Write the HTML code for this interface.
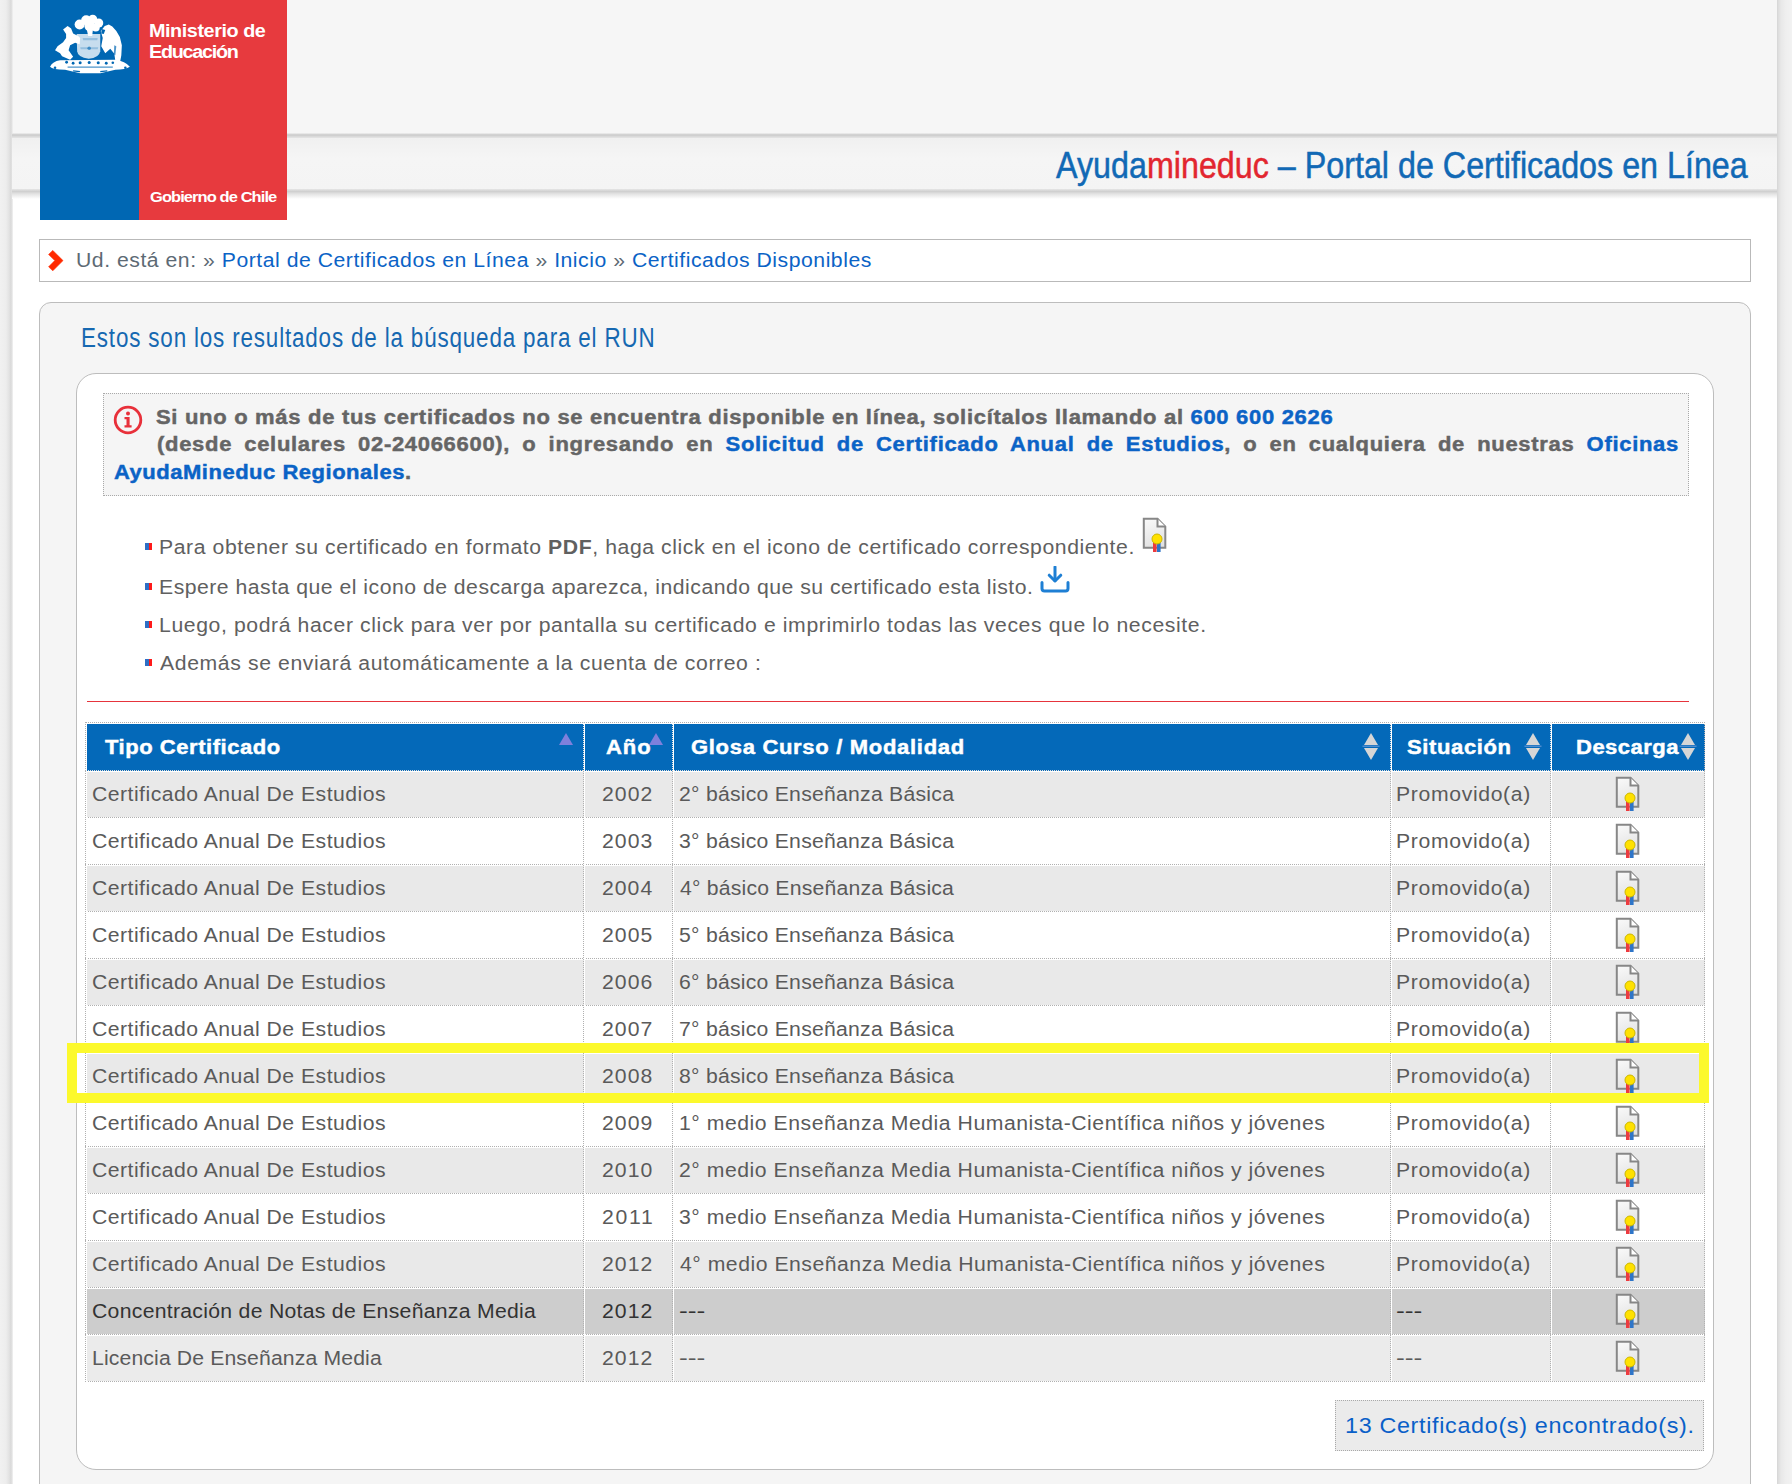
<!DOCTYPE html>
<html><head><meta charset="utf-8"><title>Portal de Certificados en Línea</title><style>
*{box-sizing:border-box}
html,body{margin:0;padding:0}
body{width:1792px;height:1484px;overflow:hidden;position:relative;background:#fff;font-family:"Liberation Sans",sans-serif}
.abs{position:absolute}
.t{position:absolute;white-space:nowrap}
.t a{color:#0b63c6;text-decoration:none}
.t .r{color:#e2262f}
#lstrip{left:0;top:0;width:13px;height:1484px;background:linear-gradient(90deg,#f1f1f1 0,#ededed 6px,#e3e3e3 9px,#d9d9d9 11px,#ececec 12.5px,#fdfdfd 13px)}
#rstrip{left:1777px;top:0;width:15px;height:1484px;background:linear-gradient(90deg,#d5d5d5 0,#dedede 1.5px,#e8e8e8 4px,#efefef 9px,#f2f2f2 15px)}
#htop{left:13px;top:0;width:1764px;height:134px;background:#f6f6f6}
#hline1{left:12px;top:133px;width:1765px;height:8px;background:linear-gradient(#f2f2f2 0,#d2d2d2 1.5px,#cfcfcf 2.5px,#dedede 4px,#ebebeb 6px,#f0f0f0 8px)}
#hband{left:12px;top:138px;width:1765px;height:52px;background:linear-gradient(#f0f0f0,#f5f5f5 40%,#f4f4f4)}
#hline2{left:12px;top:189px;width:1765px;height:10px;background:linear-gradient(#e6e6e6,#d0d0d0 25%,#e4e4e4 50%,#fafafa 90%,#fff)}
#logo{left:40px;top:0;width:247px;height:220px;background:#e73a3e}
#logo .blue{position:absolute;left:0;top:0;width:99px;height:220px;background:#0067b3}
#bc{left:39px;top:239px;width:1712px;height:43px;border:1px solid #b9b9b9;background:#fff}
#panel{left:39px;top:302px;width:1712px;height:1300px;border:1px solid #bdbdbd;border-radius:12px;background:#f5f5f5}
#inner{left:76px;top:373px;width:1638px;height:1097px;border:1px solid #bdbdbd;border-radius:20px;background:#fff}
#info{left:103px;top:393px;width:1586px;height:103px;border:1px dotted #a9a9a9;background:#f5f5f5}
#info2{-webkit-text-stroke:0.45px currentColor;left:157px;top:431px;width:1383.6px;transform:scaleX(1.10);transform-origin:0 0;font-size:20px;line-height:24px;font-weight:700;color:#656565;text-align:justify;text-align-last:justify;white-space:nowrap}
#info2 a{color:#0b63c6}
.sq{position:absolute;width:7px;height:7px;background:linear-gradient(90deg,#2e6fc5 50%,#ff1a1a 50%)}
#redline{left:87px;top:701px;width:1602px;height:1px;background:#e6343c}
.row{position:absolute;left:86px;width:1619px;height:47px}
.hl{position:absolute;left:85px;width:1620px;height:0;border-top:1px dotted #b0b0b0}
.vl{position:absolute;width:0;border-left:1px dotted #b0b0b0}
.wl{position:absolute;background:#fff}
#count{left:1335px;top:1400px;width:369px;height:51px;border:1px dotted #a9a9a9;background:#ebebeb}
#yellow{left:67px;top:1043px;width:1642px;height:60px;border:10px solid #fcf92c}
</style></head>
<body><div id="lstrip" class="abs"></div><div id="rstrip" class="abs"></div><div id="htop" class="abs"></div><div id="hline1" class="abs"></div><div id="hband" class="abs"></div><div id="hline2" class="abs"></div><div id="logo" class="abs"><div class="blue"><svg width="90" height="68" viewBox="0 0 1792 1354" style="position:absolute;left:5px;top:10px">
<g fill="#fff">
<circle cx="690" cy="290" r="100"/><circle cx="820" cy="205" r="100"/><circle cx="950" cy="185" r="90"/><circle cx="1070" cy="260" r="90"/><circle cx="890" cy="320" r="105"/><circle cx="1010" cy="350" r="80"/>
<path d="M820 330 L960 330 L940 520 L860 520 Z"/>
<path d="M360 390 L450 320 L520 370 L560 470 L660 520 L700 560 L690 680 L600 650 L500 700 L470 800 L560 930 L500 990 L340 920 L300 860 L200 800 L250 720 L360 640 L420 560 L420 480 Z"/>
<path d="M630 480 L1100 480 L1100 820 Q1080 950 870 970 Q650 940 640 820 Z" fill-opacity="0.78"/>
<path d="M1110 420 L1190 320 L1270 290 L1340 330 L1420 420 L1490 540 L1530 700 L1520 900 L1490 1060 L1400 1010 L1380 870 L1300 770 L1200 860 L1120 720 L1150 560 Z"/>
<path d="M100 1130 Q150 1020 300 1000 L1400 990 Q1600 1020 1690 1130 Q1600 1190 1400 1190 L1100 1260 L700 1260 L400 1190 Q150 1190 100 1130 Z"/>
</g>
<g fill="#0067b3">
<path d="M1130 380 L1200 400 L1170 480 L1120 470 Z"/>
<path d="M1380 700 L1420 720 L1400 900 L1370 880 Z" fill-opacity="0.7"/>
<path d="M750 560 L1050 560 L1040 600 L760 600 Z" fill-opacity="0.25"/>
<path d="M700 740 L1060 740 L1050 780 L710 780 Z" fill-opacity="0.25"/>
<circle cx="880" cy="760" r="35" fill-opacity="0.6"/>
<circle cx="430" cy="1040" r="28"/><circle cx="560" cy="1060" r="28"/><circle cx="700" cy="1050" r="30"/><circle cx="880" cy="1045" r="30"/><circle cx="1060" cy="1050" r="30"/><circle cx="1220" cy="1060" r="28"/><circle cx="1350" cy="1050" r="26"/>
<path d="M450 1125 L1350 1125 L1350 1150 L450 1150 Z" fill-opacity="0.7"/>
<circle cx="200" cy="1150" r="25"/><circle cx="1600" cy="1150" r="25"/>
<path d="M560 1200 L700 1215 L690 1240 L560 1225 Z"/><path d="M1100 1215 L1240 1200 L1240 1225 L1100 1240 Z"/>
</g>
</svg></div></div><div id="bc" class="abs"></div><svg width="16" height="22" viewBox="0 0 16 22" style="position:absolute;left:48px;top:250px"><path d="M0.6 4.4 L4.8 0.4 L15 10.6 L4.8 20.8 L0.6 16.8 L6.8 10.6 Z" fill="#ff2a00" stroke="#ff2a00" stroke-width="0.6" stroke-linejoin="round"/></svg><div id="panel" class="abs"></div><div id="inner" class="abs"></div><div id="info" class="abs"></div><svg width="30" height="30" viewBox="0 0 30 30" style="position:absolute;left:112.5px;top:405px"><circle cx="15" cy="15" r="12.8" fill="none" stroke="#e8303a" stroke-width="2.8"/><circle cx="15" cy="8.6" r="2" fill="#e8303a"/><path d="M11.5 12 H16.6 V20.3 H18.6 V22.6 H11.5 V20.3 H13.5 V14.2 H11.5 Z" fill="#e8303a"/></svg><div id="info2" class="abs" style="letter-spacing:0.629px;top:434.17px;line-height:20px">(desde celulares 02-24066600), o ingresando en <a>Solicitud de Certificado Anual de Estudios</a>, o en cualquiera de nuestras <a>Oficinas</a></div><div class="sq" style="left:145px;top:543px"></div><div class="sq" style="left:145px;top:583px"></div><div class="sq" style="left:145px;top:621px"></div><div class="sq" style="left:145px;top:659px"></div><div class="abs" style="left:1142px;top:517px"><svg width="26" height="36" viewBox="0 0 26 36"><defs><linearGradient id="pg" x1="0" y1="0" x2="0.3" y2="1"><stop offset="0" stop-color="#fafafa"/><stop offset="1" stop-color="#e2e2e2"/></linearGradient></defs><path d="M1.8 1.8 H15.5 L23.3 9.6 V30.8 H1.8 Z" fill="url(#pg)" stroke="#878787" stroke-width="2"/><path d="M15.5 1.8 V9.6 H23.3" fill="#fff" stroke="#878787" stroke-width="2"/><rect x="11" y="25" width="3.6" height="10" fill="#ec3b40"/><rect x="15" y="25" width="3.6" height="10" fill="#2e75c8"/><circle cx="15" cy="22" r="5" fill="#ffe100" stroke="#cdb800" stroke-width="1"/></svg></div><svg width="30" height="27" viewBox="0 0 30 27" style="position:absolute;left:1039.5px;top:566px"><path d="M15 1 V14.5" stroke="#1e7fd4" stroke-width="3" stroke-linecap="round"/><path d="M9.2 9.2 L15 15 L20.8 9.2" fill="none" stroke="#1e7fd4" stroke-width="3" stroke-linecap="round" stroke-linejoin="round"/><path d="M2 16.5 V22.5 Q2 25 4.5 25 H25.5 Q28 25 28 22.5 V16.5" fill="none" stroke="#1e7fd4" stroke-width="3" stroke-linecap="round"/></svg><div id="redline" class="abs"></div><div class="abs" style="left:86px;top:724px;width:1619px;height:47px;background:#0469b9"></div><div class="wl" style="left:86px;top:723px;width:1619px;height:1px"></div><div class="row" style="top:772px;height:45px;background:#e9e9e9"></div><div class="wl" style="left:86px;top:771px;width:1619px;height:1px"></div><div class="row" style="top:819px;height:45px;background:#fff"></div><div class="wl" style="left:86px;top:818px;width:1619px;height:1px"></div><div class="row" style="top:866px;height:45px;background:#e9e9e9"></div><div class="wl" style="left:86px;top:865px;width:1619px;height:1px"></div><div class="row" style="top:913px;height:45px;background:#fff"></div><div class="wl" style="left:86px;top:912px;width:1619px;height:1px"></div><div class="row" style="top:960px;height:45px;background:#e9e9e9"></div><div class="wl" style="left:86px;top:959px;width:1619px;height:1px"></div><div class="row" style="top:1007px;height:45px;background:#fff"></div><div class="wl" style="left:86px;top:1006px;width:1619px;height:1px"></div><div class="row" style="top:1054px;height:45px;background:#e9e9e9"></div><div class="wl" style="left:86px;top:1053px;width:1619px;height:1px"></div><div class="row" style="top:1101px;height:45px;background:#fff"></div><div class="wl" style="left:86px;top:1100px;width:1619px;height:1px"></div><div class="row" style="top:1148px;height:45px;background:#e9e9e9"></div><div class="wl" style="left:86px;top:1147px;width:1619px;height:1px"></div><div class="row" style="top:1195px;height:45px;background:#fff"></div><div class="wl" style="left:86px;top:1194px;width:1619px;height:1px"></div><div class="row" style="top:1242px;height:45px;background:#e9e9e9"></div><div class="wl" style="left:86px;top:1241px;width:1619px;height:1px"></div><div class="row" style="top:1289px;height:45px;background:#cdcdcd"></div><div class="wl" style="left:86px;top:1288px;width:1619px;height:1px"></div><div class="row" style="top:1336px;height:45px;background:#ebebeb"></div><div class="wl" style="left:86px;top:1335px;width:1619px;height:1px"></div><div class="hl" style="top:722px"></div><div class="hl" style="top:770px;border-top-color:#e0e0e0"></div><div class="hl" style="top:817px;"></div><div class="hl" style="top:864px;"></div><div class="hl" style="top:911px;"></div><div class="hl" style="top:958px;"></div><div class="hl" style="top:1005px;"></div><div class="hl" style="top:1052px;"></div><div class="hl" style="top:1099px;"></div><div class="hl" style="top:1146px;"></div><div class="hl" style="top:1193px;"></div><div class="hl" style="top:1240px;"></div><div class="hl" style="top:1287px;"></div><div class="hl" style="top:1334px;"></div><div class="hl" style="top:1381px;"></div><div class="wl" style="left:86px;top:723px;width:1px;height:659px"></div><div class="vl" style="left:85px;top:771px;height:611px"></div><div class="vl" style="left:85px;top:722px;height:49px;border-left-color:#b0b0b0"></div><div class="wl" style="left:584px;top:723px;width:1px;height:659px"></div><div class="vl" style="left:583px;top:771px;height:611px"></div><div class="vl" style="left:583px;top:722px;height:49px;border-left-color:#e8e8e8"></div><div class="wl" style="left:673px;top:723px;width:1px;height:659px"></div><div class="vl" style="left:672px;top:771px;height:611px"></div><div class="vl" style="left:672px;top:722px;height:49px;border-left-color:#e8e8e8"></div><div class="wl" style="left:1391px;top:723px;width:1px;height:659px"></div><div class="vl" style="left:1390px;top:771px;height:611px"></div><div class="vl" style="left:1390px;top:722px;height:49px;border-left-color:#e8e8e8"></div><div class="wl" style="left:1551px;top:723px;width:1px;height:659px"></div><div class="vl" style="left:1550px;top:771px;height:611px"></div><div class="vl" style="left:1550px;top:722px;height:49px;border-left-color:#e8e8e8"></div><div class="wl" style="left:1705px;top:723px;width:0px;height:659px"></div><div class="vl" style="left:1704px;top:771px;height:611px"></div><div class="vl" style="left:1704px;top:722px;height:49px;border-left-color:#b0b0b0"></div><div class="abs" style="left:558px;top:732px"><svg width="16" height="14" viewBox="0 0 16 14"><path d="M1 13 L8 1 L15 13 Z" fill="#7f80dc"/></svg></div><div class="abs" style="left:647.5px;top:732px"><svg width="16" height="14" viewBox="0 0 16 14"><path d="M1 13 L8 1 L15 13 Z" fill="#7f80dc"/></svg></div><div class="abs" style="left:1362px;top:732px"><svg width="18" height="30" viewBox="0 0 18 30"><path d="M2 13 L9 1 L16 13 Z" fill="#d6d6d6"/><path d="M2 16 L9 28 L16 16 Z" fill="#d6d6d6"/><rect x="0.5" y="13.5" width="17" height="1.5" fill="#4f8ccf"/></svg></div><div class="abs" style="left:1524px;top:732px"><svg width="18" height="30" viewBox="0 0 18 30"><path d="M2 13 L9 1 L16 13 Z" fill="#d6d6d6"/><path d="M2 16 L9 28 L16 16 Z" fill="#d6d6d6"/><rect x="0.5" y="13.5" width="17" height="1.5" fill="#4f8ccf"/></svg></div><div class="abs" style="left:1679px;top:732px"><svg width="18" height="30" viewBox="0 0 18 30"><path d="M2 13 L9 1 L16 13 Z" fill="#d6d6d6"/><path d="M2 16 L9 28 L16 16 Z" fill="#d6d6d6"/><rect x="0.5" y="13.5" width="17" height="1.5" fill="#4f8ccf"/></svg></div><div class="abs" style="left:1615px;top:776px"><svg width="26" height="36" viewBox="0 0 26 36"><defs><linearGradient id="pg" x1="0" y1="0" x2="0.3" y2="1"><stop offset="0" stop-color="#fafafa"/><stop offset="1" stop-color="#e2e2e2"/></linearGradient></defs><path d="M1.8 1.8 H15.5 L23.3 9.6 V30.8 H1.8 Z" fill="url(#pg)" stroke="#878787" stroke-width="2"/><path d="M15.5 1.8 V9.6 H23.3" fill="#fff" stroke="#878787" stroke-width="2"/><rect x="11" y="25" width="3.6" height="10" fill="#ec3b40"/><rect x="15" y="25" width="3.6" height="10" fill="#2e75c8"/><circle cx="15" cy="22" r="5" fill="#ffe100" stroke="#cdb800" stroke-width="1"/></svg></div><div class="abs" style="left:1615px;top:823px"><svg width="26" height="36" viewBox="0 0 26 36"><defs><linearGradient id="pg" x1="0" y1="0" x2="0.3" y2="1"><stop offset="0" stop-color="#fafafa"/><stop offset="1" stop-color="#e2e2e2"/></linearGradient></defs><path d="M1.8 1.8 H15.5 L23.3 9.6 V30.8 H1.8 Z" fill="url(#pg)" stroke="#878787" stroke-width="2"/><path d="M15.5 1.8 V9.6 H23.3" fill="#fff" stroke="#878787" stroke-width="2"/><rect x="11" y="25" width="3.6" height="10" fill="#ec3b40"/><rect x="15" y="25" width="3.6" height="10" fill="#2e75c8"/><circle cx="15" cy="22" r="5" fill="#ffe100" stroke="#cdb800" stroke-width="1"/></svg></div><div class="abs" style="left:1615px;top:870px"><svg width="26" height="36" viewBox="0 0 26 36"><defs><linearGradient id="pg" x1="0" y1="0" x2="0.3" y2="1"><stop offset="0" stop-color="#fafafa"/><stop offset="1" stop-color="#e2e2e2"/></linearGradient></defs><path d="M1.8 1.8 H15.5 L23.3 9.6 V30.8 H1.8 Z" fill="url(#pg)" stroke="#878787" stroke-width="2"/><path d="M15.5 1.8 V9.6 H23.3" fill="#fff" stroke="#878787" stroke-width="2"/><rect x="11" y="25" width="3.6" height="10" fill="#ec3b40"/><rect x="15" y="25" width="3.6" height="10" fill="#2e75c8"/><circle cx="15" cy="22" r="5" fill="#ffe100" stroke="#cdb800" stroke-width="1"/></svg></div><div class="abs" style="left:1615px;top:917px"><svg width="26" height="36" viewBox="0 0 26 36"><defs><linearGradient id="pg" x1="0" y1="0" x2="0.3" y2="1"><stop offset="0" stop-color="#fafafa"/><stop offset="1" stop-color="#e2e2e2"/></linearGradient></defs><path d="M1.8 1.8 H15.5 L23.3 9.6 V30.8 H1.8 Z" fill="url(#pg)" stroke="#878787" stroke-width="2"/><path d="M15.5 1.8 V9.6 H23.3" fill="#fff" stroke="#878787" stroke-width="2"/><rect x="11" y="25" width="3.6" height="10" fill="#ec3b40"/><rect x="15" y="25" width="3.6" height="10" fill="#2e75c8"/><circle cx="15" cy="22" r="5" fill="#ffe100" stroke="#cdb800" stroke-width="1"/></svg></div><div class="abs" style="left:1615px;top:964px"><svg width="26" height="36" viewBox="0 0 26 36"><defs><linearGradient id="pg" x1="0" y1="0" x2="0.3" y2="1"><stop offset="0" stop-color="#fafafa"/><stop offset="1" stop-color="#e2e2e2"/></linearGradient></defs><path d="M1.8 1.8 H15.5 L23.3 9.6 V30.8 H1.8 Z" fill="url(#pg)" stroke="#878787" stroke-width="2"/><path d="M15.5 1.8 V9.6 H23.3" fill="#fff" stroke="#878787" stroke-width="2"/><rect x="11" y="25" width="3.6" height="10" fill="#ec3b40"/><rect x="15" y="25" width="3.6" height="10" fill="#2e75c8"/><circle cx="15" cy="22" r="5" fill="#ffe100" stroke="#cdb800" stroke-width="1"/></svg></div><div class="abs" style="left:1615px;top:1011px"><svg width="26" height="36" viewBox="0 0 26 36"><defs><linearGradient id="pg" x1="0" y1="0" x2="0.3" y2="1"><stop offset="0" stop-color="#fafafa"/><stop offset="1" stop-color="#e2e2e2"/></linearGradient></defs><path d="M1.8 1.8 H15.5 L23.3 9.6 V30.8 H1.8 Z" fill="url(#pg)" stroke="#878787" stroke-width="2"/><path d="M15.5 1.8 V9.6 H23.3" fill="#fff" stroke="#878787" stroke-width="2"/><rect x="11" y="25" width="3.6" height="10" fill="#ec3b40"/><rect x="15" y="25" width="3.6" height="10" fill="#2e75c8"/><circle cx="15" cy="22" r="5" fill="#ffe100" stroke="#cdb800" stroke-width="1"/></svg></div><div class="abs" style="left:1615px;top:1058px"><svg width="26" height="36" viewBox="0 0 26 36"><defs><linearGradient id="pg" x1="0" y1="0" x2="0.3" y2="1"><stop offset="0" stop-color="#fafafa"/><stop offset="1" stop-color="#e2e2e2"/></linearGradient></defs><path d="M1.8 1.8 H15.5 L23.3 9.6 V30.8 H1.8 Z" fill="url(#pg)" stroke="#878787" stroke-width="2"/><path d="M15.5 1.8 V9.6 H23.3" fill="#fff" stroke="#878787" stroke-width="2"/><rect x="11" y="25" width="3.6" height="10" fill="#ec3b40"/><rect x="15" y="25" width="3.6" height="10" fill="#2e75c8"/><circle cx="15" cy="22" r="5" fill="#ffe100" stroke="#cdb800" stroke-width="1"/></svg></div><div class="abs" style="left:1615px;top:1105px"><svg width="26" height="36" viewBox="0 0 26 36"><defs><linearGradient id="pg" x1="0" y1="0" x2="0.3" y2="1"><stop offset="0" stop-color="#fafafa"/><stop offset="1" stop-color="#e2e2e2"/></linearGradient></defs><path d="M1.8 1.8 H15.5 L23.3 9.6 V30.8 H1.8 Z" fill="url(#pg)" stroke="#878787" stroke-width="2"/><path d="M15.5 1.8 V9.6 H23.3" fill="#fff" stroke="#878787" stroke-width="2"/><rect x="11" y="25" width="3.6" height="10" fill="#ec3b40"/><rect x="15" y="25" width="3.6" height="10" fill="#2e75c8"/><circle cx="15" cy="22" r="5" fill="#ffe100" stroke="#cdb800" stroke-width="1"/></svg></div><div class="abs" style="left:1615px;top:1152px"><svg width="26" height="36" viewBox="0 0 26 36"><defs><linearGradient id="pg" x1="0" y1="0" x2="0.3" y2="1"><stop offset="0" stop-color="#fafafa"/><stop offset="1" stop-color="#e2e2e2"/></linearGradient></defs><path d="M1.8 1.8 H15.5 L23.3 9.6 V30.8 H1.8 Z" fill="url(#pg)" stroke="#878787" stroke-width="2"/><path d="M15.5 1.8 V9.6 H23.3" fill="#fff" stroke="#878787" stroke-width="2"/><rect x="11" y="25" width="3.6" height="10" fill="#ec3b40"/><rect x="15" y="25" width="3.6" height="10" fill="#2e75c8"/><circle cx="15" cy="22" r="5" fill="#ffe100" stroke="#cdb800" stroke-width="1"/></svg></div><div class="abs" style="left:1615px;top:1199px"><svg width="26" height="36" viewBox="0 0 26 36"><defs><linearGradient id="pg" x1="0" y1="0" x2="0.3" y2="1"><stop offset="0" stop-color="#fafafa"/><stop offset="1" stop-color="#e2e2e2"/></linearGradient></defs><path d="M1.8 1.8 H15.5 L23.3 9.6 V30.8 H1.8 Z" fill="url(#pg)" stroke="#878787" stroke-width="2"/><path d="M15.5 1.8 V9.6 H23.3" fill="#fff" stroke="#878787" stroke-width="2"/><rect x="11" y="25" width="3.6" height="10" fill="#ec3b40"/><rect x="15" y="25" width="3.6" height="10" fill="#2e75c8"/><circle cx="15" cy="22" r="5" fill="#ffe100" stroke="#cdb800" stroke-width="1"/></svg></div><div class="abs" style="left:1615px;top:1246px"><svg width="26" height="36" viewBox="0 0 26 36"><defs><linearGradient id="pg" x1="0" y1="0" x2="0.3" y2="1"><stop offset="0" stop-color="#fafafa"/><stop offset="1" stop-color="#e2e2e2"/></linearGradient></defs><path d="M1.8 1.8 H15.5 L23.3 9.6 V30.8 H1.8 Z" fill="url(#pg)" stroke="#878787" stroke-width="2"/><path d="M15.5 1.8 V9.6 H23.3" fill="#fff" stroke="#878787" stroke-width="2"/><rect x="11" y="25" width="3.6" height="10" fill="#ec3b40"/><rect x="15" y="25" width="3.6" height="10" fill="#2e75c8"/><circle cx="15" cy="22" r="5" fill="#ffe100" stroke="#cdb800" stroke-width="1"/></svg></div><div class="abs" style="left:1615px;top:1293px"><svg width="26" height="36" viewBox="0 0 26 36"><defs><linearGradient id="pg" x1="0" y1="0" x2="0.3" y2="1"><stop offset="0" stop-color="#fafafa"/><stop offset="1" stop-color="#e2e2e2"/></linearGradient></defs><path d="M1.8 1.8 H15.5 L23.3 9.6 V30.8 H1.8 Z" fill="url(#pg)" stroke="#878787" stroke-width="2"/><path d="M15.5 1.8 V9.6 H23.3" fill="#fff" stroke="#878787" stroke-width="2"/><rect x="11" y="25" width="3.6" height="10" fill="#ec3b40"/><rect x="15" y="25" width="3.6" height="10" fill="#2e75c8"/><circle cx="15" cy="22" r="5" fill="#ffe100" stroke="#cdb800" stroke-width="1"/></svg></div><div class="abs" style="left:1615px;top:1340px"><svg width="26" height="36" viewBox="0 0 26 36"><defs><linearGradient id="pg" x1="0" y1="0" x2="0.3" y2="1"><stop offset="0" stop-color="#fafafa"/><stop offset="1" stop-color="#e2e2e2"/></linearGradient></defs><path d="M1.8 1.8 H15.5 L23.3 9.6 V30.8 H1.8 Z" fill="url(#pg)" stroke="#878787" stroke-width="2"/><path d="M15.5 1.8 V9.6 H23.3" fill="#fff" stroke="#878787" stroke-width="2"/><rect x="11" y="25" width="3.6" height="10" fill="#ec3b40"/><rect x="15" y="25" width="3.6" height="10" fill="#2e75c8"/><circle cx="15" cy="22" r="5" fill="#ffe100" stroke="#cdb800" stroke-width="1"/></svg></div><div id="count" class="abs"></div><div id="bctext" class="t" style="left:76.20px;top:249.97px;font-size:20px;line-height:20px;font-weight:400;color:#5d6a74;letter-spacing:0.492px;transform:scaleX(1.06);transform-origin:0 0;">Ud. está en: » <a>Portal de Certificados en Línea</a> » <a>Inicio</a> » <a>Certificados Disponibles</a></div><div id="ptitle" class="t" style="left:81.00px;top:324.94px;font-size:27px;line-height:27px;font-weight:400;color:#1668b1;letter-spacing:1.007px;transform:scaleX(0.8300);transform-origin:0 0;">Estos son los resultados de la búsqueda para el RUN</div><div id="htitle" class="t" style="left:1056.00px;top:147.48px;font-size:37px;line-height:37px;font-weight:400;color:#1169b5;letter-spacing:0.000px;transform:scaleX(0.8720);transform-origin:0 0;-webkit-text-stroke:0.5px currentColor;">Ayuda<span class="r">mineduc</span> – Portal de Certificados en Línea</div><div id="info1" class="t" style="left:156.00px;top:406.87px;font-size:20px;line-height:20px;font-weight:700;color:#656565;letter-spacing:0.629px;transform:scaleX(1.1);transform-origin:0 0;-webkit-text-stroke:0.45px currentColor;">Si uno o más de tus certificados no se encuentra disponible en línea, solicítalos llamando al <a>600 600 2626</a></div><div id="info3" class="t" style="left:113.60px;top:461.87px;font-size:20px;line-height:20px;font-weight:700;color:#656565;letter-spacing:0.466px;transform:scaleX(1.1);transform-origin:0 0;-webkit-text-stroke:0.45px currentColor;"><a>AyudaMineduc Regionales</a>.</div><div id="bul1" class="t" style="left:158.80px;top:536.87px;font-size:20px;line-height:20px;font-weight:400;color:#606060;letter-spacing:0.546px;transform:scaleX(1.06);transform-origin:0 0;">Para obtener su certificado en formato <b>PDF</b>, haga click en el icono de certificado correspondiente.</div><div id="bul2" class="t" style="left:158.80px;top:576.67px;font-size:20px;line-height:20px;font-weight:400;color:#606060;letter-spacing:0.466px;transform:scaleX(1.06);transform-origin:0 0;">Espere hasta que el icono de descarga aparezca, indicando que su certificado esta listo.</div><div id="bul3" class="t" style="left:158.80px;top:614.77px;font-size:20px;line-height:20px;font-weight:400;color:#606060;letter-spacing:0.562px;transform:scaleX(1.06);transform-origin:0 0;">Luego, podrá hacer click para ver por pantalla su certificado e imprimirlo todas las veces que lo necesite.</div><div id="bul4" class="t" style="left:159.80px;top:652.57px;font-size:20px;line-height:20px;font-weight:400;color:#606060;letter-spacing:0.574px;transform:scaleX(1.06);transform-origin:0 0;">Además se enviará automáticamente a la cuenta de correo :</div><div id="h1" class="t" style="left:104.80px;top:737.17px;font-size:20px;line-height:20px;font-weight:700;color:#fff;letter-spacing:0.491px;transform:scaleX(1.1);transform-origin:0 0;-webkit-text-stroke:0.45px currentColor;">Tipo Certificado</div><div id="h2" class="t" style="left:605.90px;top:737.17px;font-size:20px;line-height:20px;font-weight:700;color:#fff;letter-spacing:0.818px;transform:scaleX(1.1);transform-origin:0 0;-webkit-text-stroke:0.45px currentColor;">Año</div><div id="h3" class="t" style="left:691.40px;top:737.17px;font-size:20px;line-height:20px;font-weight:700;color:#fff;letter-spacing:0.629px;transform:scaleX(1.1);transform-origin:0 0;-webkit-text-stroke:0.45px currentColor;">Glosa Curso / Modalidad</div><div id="h4" class="t" style="left:1407.40px;top:737.17px;font-size:20px;line-height:20px;font-weight:700;color:#fff;letter-spacing:0.566px;transform:scaleX(1.1);transform-origin:0 0;-webkit-text-stroke:0.45px currentColor;">Situación</div><div id="h5" class="t" style="left:1575.50px;top:737.17px;font-size:20px;line-height:20px;font-weight:700;color:#fff;letter-spacing:0.447px;transform:scaleX(1.1);transform-origin:0 0;-webkit-text-stroke:0.45px currentColor;">Descarga</div><div id="r1a" class="t" style="left:92.20px;top:784.37px;font-size:20px;line-height:20px;font-weight:400;color:#5a5a5a;letter-spacing:0.442px;transform:scaleX(1.06);transform-origin:0 0;">Certificado Anual De Estudios</div><div id="r1b" class="t" style="left:602.40px;top:784.37px;font-size:20px;line-height:20px;font-weight:400;color:#5a5a5a;letter-spacing:0.981px;transform:scaleX(1.06);transform-origin:0 0;">2002</div><div id="r1c" class="t" style="left:679.00px;top:784.37px;font-size:20px;line-height:20px;font-weight:400;color:#5a5a5a;letter-spacing:0.227px;transform:scaleX(1.06);transform-origin:0 0;">2° básico Enseñanza Básica</div><div id="r1d" class="t" style="left:1396.40px;top:784.37px;font-size:20px;line-height:20px;font-weight:400;color:#5a5a5a;letter-spacing:0.606px;transform:scaleX(1.06);transform-origin:0 0;">Promovido(a)</div><div id="r2a" class="t" style="left:92.20px;top:831.37px;font-size:20px;line-height:20px;font-weight:400;color:#5a5a5a;letter-spacing:0.442px;transform:scaleX(1.06);transform-origin:0 0;">Certificado Anual De Estudios</div><div id="r2b" class="t" style="left:602.40px;top:831.37px;font-size:20px;line-height:20px;font-weight:400;color:#5a5a5a;letter-spacing:0.981px;transform:scaleX(1.06);transform-origin:0 0;">2003</div><div id="r2c" class="t" style="left:679.00px;top:831.37px;font-size:20px;line-height:20px;font-weight:400;color:#5a5a5a;letter-spacing:0.227px;transform:scaleX(1.06);transform-origin:0 0;">3° básico Enseñanza Básica</div><div id="r2d" class="t" style="left:1396.40px;top:831.37px;font-size:20px;line-height:20px;font-weight:400;color:#5a5a5a;letter-spacing:0.606px;transform:scaleX(1.06);transform-origin:0 0;">Promovido(a)</div><div id="r3a" class="t" style="left:92.20px;top:878.37px;font-size:20px;line-height:20px;font-weight:400;color:#5a5a5a;letter-spacing:0.442px;transform:scaleX(1.06);transform-origin:0 0;">Certificado Anual De Estudios</div><div id="r3b" class="t" style="left:602.40px;top:878.37px;font-size:20px;line-height:20px;font-weight:400;color:#5a5a5a;letter-spacing:0.962px;transform:scaleX(1.06);transform-origin:0 0;">2004</div><div id="r3c" class="t" style="left:680.00px;top:878.37px;font-size:20px;line-height:20px;font-weight:400;color:#5a5a5a;letter-spacing:0.187px;transform:scaleX(1.06);transform-origin:0 0;">4° básico Enseñanza Básica</div><div id="r3d" class="t" style="left:1396.40px;top:878.37px;font-size:20px;line-height:20px;font-weight:400;color:#5a5a5a;letter-spacing:0.606px;transform:scaleX(1.06);transform-origin:0 0;">Promovido(a)</div><div id="r4a" class="t" style="left:92.20px;top:925.37px;font-size:20px;line-height:20px;font-weight:400;color:#5a5a5a;letter-spacing:0.442px;transform:scaleX(1.06);transform-origin:0 0;">Certificado Anual De Estudios</div><div id="r4b" class="t" style="left:602.40px;top:925.37px;font-size:20px;line-height:20px;font-weight:400;color:#5a5a5a;letter-spacing:0.981px;transform:scaleX(1.06);transform-origin:0 0;">2005</div><div id="r4c" class="t" style="left:679.00px;top:925.37px;font-size:20px;line-height:20px;font-weight:400;color:#5a5a5a;letter-spacing:0.227px;transform:scaleX(1.06);transform-origin:0 0;">5° básico Enseñanza Básica</div><div id="r4d" class="t" style="left:1396.40px;top:925.37px;font-size:20px;line-height:20px;font-weight:400;color:#5a5a5a;letter-spacing:0.606px;transform:scaleX(1.06);transform-origin:0 0;">Promovido(a)</div><div id="r5a" class="t" style="left:92.20px;top:972.37px;font-size:20px;line-height:20px;font-weight:400;color:#5a5a5a;letter-spacing:0.442px;transform:scaleX(1.06);transform-origin:0 0;">Certificado Anual De Estudios</div><div id="r5b" class="t" style="left:602.40px;top:972.37px;font-size:20px;line-height:20px;font-weight:400;color:#5a5a5a;letter-spacing:0.981px;transform:scaleX(1.06);transform-origin:0 0;">2006</div><div id="r5c" class="t" style="left:679.00px;top:972.37px;font-size:20px;line-height:20px;font-weight:400;color:#5a5a5a;letter-spacing:0.227px;transform:scaleX(1.06);transform-origin:0 0;">6° básico Enseñanza Básica</div><div id="r5d" class="t" style="left:1396.40px;top:972.37px;font-size:20px;line-height:20px;font-weight:400;color:#5a5a5a;letter-spacing:0.606px;transform:scaleX(1.06);transform-origin:0 0;">Promovido(a)</div><div id="r6a" class="t" style="left:92.20px;top:1019.37px;font-size:20px;line-height:20px;font-weight:400;color:#5a5a5a;letter-spacing:0.442px;transform:scaleX(1.06);transform-origin:0 0;">Certificado Anual De Estudios</div><div id="r6b" class="t" style="left:602.40px;top:1019.37px;font-size:20px;line-height:20px;font-weight:400;color:#5a5a5a;letter-spacing:0.981px;transform:scaleX(1.06);transform-origin:0 0;">2007</div><div id="r6c" class="t" style="left:679.00px;top:1019.37px;font-size:20px;line-height:20px;font-weight:400;color:#5a5a5a;letter-spacing:0.227px;transform:scaleX(1.06);transform-origin:0 0;">7° básico Enseñanza Básica</div><div id="r6d" class="t" style="left:1396.40px;top:1019.37px;font-size:20px;line-height:20px;font-weight:400;color:#5a5a5a;letter-spacing:0.606px;transform:scaleX(1.06);transform-origin:0 0;">Promovido(a)</div><div id="r7a" class="t" style="left:92.20px;top:1066.37px;font-size:20px;line-height:20px;font-weight:400;color:#5a5a5a;letter-spacing:0.442px;transform:scaleX(1.06);transform-origin:0 0;">Certificado Anual De Estudios</div><div id="r7b" class="t" style="left:602.40px;top:1066.37px;font-size:20px;line-height:20px;font-weight:400;color:#5a5a5a;letter-spacing:0.981px;transform:scaleX(1.06);transform-origin:0 0;">2008</div><div id="r7c" class="t" style="left:679.00px;top:1066.37px;font-size:20px;line-height:20px;font-weight:400;color:#5a5a5a;letter-spacing:0.227px;transform:scaleX(1.06);transform-origin:0 0;">8° básico Enseñanza Básica</div><div id="r7d" class="t" style="left:1396.40px;top:1066.37px;font-size:20px;line-height:20px;font-weight:400;color:#5a5a5a;letter-spacing:0.606px;transform:scaleX(1.06);transform-origin:0 0;">Promovido(a)</div><div id="r8a" class="t" style="left:92.20px;top:1113.37px;font-size:20px;line-height:20px;font-weight:400;color:#5a5a5a;letter-spacing:0.442px;transform:scaleX(1.06);transform-origin:0 0;">Certificado Anual De Estudios</div><div id="r8b" class="t" style="left:602.40px;top:1113.37px;font-size:20px;line-height:20px;font-weight:400;color:#5a5a5a;letter-spacing:0.981px;transform:scaleX(1.06);transform-origin:0 0;">2009</div><div id="r8c" class="t" style="left:679.00px;top:1113.37px;font-size:20px;line-height:20px;font-weight:400;color:#5a5a5a;letter-spacing:0.498px;transform:scaleX(1.06);transform-origin:0 0;">1° medio Enseñanza Media Humanista-Científica niños y jóvenes</div><div id="r8d" class="t" style="left:1396.40px;top:1113.37px;font-size:20px;line-height:20px;font-weight:400;color:#5a5a5a;letter-spacing:0.606px;transform:scaleX(1.06);transform-origin:0 0;">Promovido(a)</div><div id="r9a" class="t" style="left:92.20px;top:1160.37px;font-size:20px;line-height:20px;font-weight:400;color:#5a5a5a;letter-spacing:0.442px;transform:scaleX(1.06);transform-origin:0 0;">Certificado Anual De Estudios</div><div id="r9b" class="t" style="left:602.40px;top:1160.37px;font-size:20px;line-height:20px;font-weight:400;color:#5a5a5a;letter-spacing:0.981px;transform:scaleX(1.06);transform-origin:0 0;">2010</div><div id="r9c" class="t" style="left:679.00px;top:1160.37px;font-size:20px;line-height:20px;font-weight:400;color:#5a5a5a;letter-spacing:0.498px;transform:scaleX(1.06);transform-origin:0 0;">2° medio Enseñanza Media Humanista-Científica niños y jóvenes</div><div id="r9d" class="t" style="left:1396.40px;top:1160.37px;font-size:20px;line-height:20px;font-weight:400;color:#5a5a5a;letter-spacing:0.606px;transform:scaleX(1.06);transform-origin:0 0;">Promovido(a)</div><div id="r10a" class="t" style="left:92.20px;top:1207.37px;font-size:20px;line-height:20px;font-weight:400;color:#5a5a5a;letter-spacing:0.442px;transform:scaleX(1.06);transform-origin:0 0;">Certificado Anual De Estudios</div><div id="r10b" class="t" style="left:602.40px;top:1207.37px;font-size:20px;line-height:20px;font-weight:400;color:#5a5a5a;letter-spacing:1.629px;transform:scaleX(1.06);transform-origin:0 0;">2011</div><div id="r10c" class="t" style="left:679.00px;top:1207.37px;font-size:20px;line-height:20px;font-weight:400;color:#5a5a5a;letter-spacing:0.498px;transform:scaleX(1.06);transform-origin:0 0;">3° medio Enseñanza Media Humanista-Científica niños y jóvenes</div><div id="r10d" class="t" style="left:1396.40px;top:1207.37px;font-size:20px;line-height:20px;font-weight:400;color:#5a5a5a;letter-spacing:0.606px;transform:scaleX(1.06);transform-origin:0 0;">Promovido(a)</div><div id="r11a" class="t" style="left:92.20px;top:1254.37px;font-size:20px;line-height:20px;font-weight:400;color:#5a5a5a;letter-spacing:0.442px;transform:scaleX(1.06);transform-origin:0 0;">Certificado Anual De Estudios</div><div id="r11b" class="t" style="left:602.40px;top:1254.37px;font-size:20px;line-height:20px;font-weight:400;color:#5a5a5a;letter-spacing:0.981px;transform:scaleX(1.06);transform-origin:0 0;">2012</div><div id="r11c" class="t" style="left:680.00px;top:1254.37px;font-size:20px;line-height:20px;font-weight:400;color:#5a5a5a;letter-spacing:0.481px;transform:scaleX(1.06);transform-origin:0 0;">4° medio Enseñanza Media Humanista-Científica niños y jóvenes</div><div id="r11d" class="t" style="left:1396.40px;top:1254.37px;font-size:20px;line-height:20px;font-weight:400;color:#5a5a5a;letter-spacing:0.606px;transform:scaleX(1.06);transform-origin:0 0;">Promovido(a)</div><div id="r12a" class="t" style="left:92.00px;top:1301.37px;font-size:20px;line-height:20px;font-weight:400;color:#333;letter-spacing:0.268px;transform:scaleX(1.06);transform-origin:0 0;">Concentración de Notas de Enseñanza Media</div><div id="r12b" class="t" style="left:602.40px;top:1301.37px;font-size:20px;line-height:20px;font-weight:400;color:#333;letter-spacing:0.981px;transform:scaleX(1.06);transform-origin:0 0;">2012</div><div id="r12c" class="t" style="left:679.20px;top:1301.37px;font-size:20px;line-height:20px;font-weight:400;color:#333;letter-spacing:0.000px;transform:scaleX(1.3217);transform-origin:0 0;">---</div><div id="r12d" class="t" style="left:1396.40px;top:1301.37px;font-size:20px;line-height:20px;font-weight:400;color:#333;letter-spacing:0.000px;transform:scaleX(1.3217);transform-origin:0 0;">---</div><div id="r13a" class="t" style="left:92.40px;top:1348.37px;font-size:20px;line-height:20px;font-weight:400;color:#5a5a5a;letter-spacing:0.120px;transform:scaleX(1.06);transform-origin:0 0;">Licencia De Enseñanza Media</div><div id="r13b" class="t" style="left:602.40px;top:1348.37px;font-size:20px;line-height:20px;font-weight:400;color:#5a5a5a;letter-spacing:0.981px;transform:scaleX(1.06);transform-origin:0 0;">2012</div><div id="r13c" class="t" style="left:679.20px;top:1348.37px;font-size:20px;line-height:20px;font-weight:400;color:#5a5a5a;letter-spacing:0.000px;transform:scaleX(1.3217);transform-origin:0 0;">---</div><div id="r13d" class="t" style="left:1396.40px;top:1348.37px;font-size:20px;line-height:20px;font-weight:400;color:#5a5a5a;letter-spacing:0.000px;transform:scaleX(1.3217);transform-origin:0 0;">---</div><div id="counttext" class="t" style="left:1344.60px;top:1415.28px;font-size:22px;line-height:22px;font-weight:400;color:#0a60c8;letter-spacing:0.640px;transform:scaleX(1.06);transform-origin:0 0;">13 Certificado(s) encontrado(s).</div><div id="logo1" class="t" style="left:149.00px;top:22.36px;font-size:18px;line-height:18px;font-weight:700;color:#fff;letter-spacing:-0.400px;transform:scaleX(1.1);transform-origin:0 0;">Ministerio de</div><div id="logo2" class="t" style="left:149.00px;top:42.86px;font-size:18px;line-height:18px;font-weight:700;color:#fff;letter-spacing:-1.173px;transform:scaleX(1.1);transform-origin:0 0;">Educación</div><div id="logo3" class="t" style="left:149.80px;top:189.10px;font-size:15px;line-height:15px;font-weight:700;color:#fff;letter-spacing:-0.843px;transform:scaleX(1.1);transform-origin:0 0;">Gobierno de Chile</div><div id="yellow" class="abs"></div></body></html>
